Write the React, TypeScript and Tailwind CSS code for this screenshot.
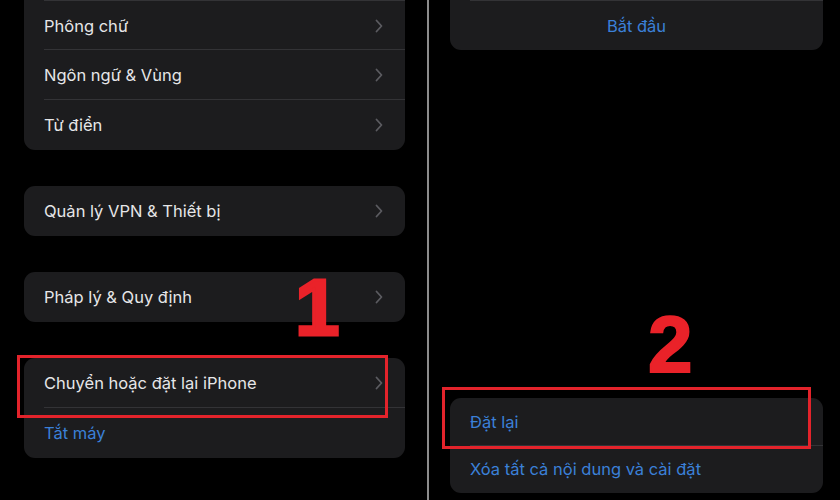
import React from "react";

const Chevron = () => (
  <svg width="8" height="14" viewBox="0 0 8 14" fill="none" className="shrink-0">
    <path d="M1.5 1.5L6.5 7L1.5 12.5" stroke="#5b5b60" strokeWidth="1.8" strokeLinecap="round" strokeLinejoin="round" />
  </svg>
);

type RowProps = {
  label: string;
  blue?: boolean;
  chevron?: boolean;
  center?: boolean;
  last?: boolean;
  h?: string;
};

const Row: React.FC<RowProps> = ({ label, blue, chevron = true, center, last, h = "h-[50px]" }) => (
  <div className={`relative flex items-center ${h} ${center ? "justify-center" : "pl-5 pr-[22px]"}`}>
    <span
      className={`text-[16.5px] leading-none ${center ? "" : "flex-1"} ${blue ? "text-[#3b80d8]" : "text-[#e6e6e8]"}`}
    >
      {label}
    </span>
    {chevron && !center && <Chevron />}
    {!last && <div className="absolute bottom-0 left-5 right-0 h-px bg-[#333336]" />}
  </div>
);

const Card: React.FC<{ className?: string; children: React.ReactNode }> = ({ className = "", children }) => (
  <div className={`rounded-[11px] bg-[#1c1c1e] overflow-hidden ${className}`}>{children}</div>
);

// continuation of a list that starts above the visible area
const TopEdge = () => (
  <div className="h-[2px] bg-[#1c1c1e]">
    <div className="ml-5 h-px bg-[#333336]" />
  </div>
);

export default function App() {
  return (
    <div
      className="relative flex h-[500px] w-[840px] overflow-hidden bg-black"
      style={{ fontFamily: "Inter, 'Noto Sans', 'Liberation Sans', sans-serif" }}
    >
      {/* Left screen */}
      <div className="flex w-[427px] shrink-0 flex-col pl-6 pr-[22px]">
        <Card className="rounded-t-none">
          <TopEdge />
          <Row label="Phông chữ" h="h-[48px]" />
          <Row label="Ngôn ngữ & Vùng" />
          <Row label="Từ điển" last />
        </Card>
        <Card className="mt-9">
          <Row label="Quản lý VPN & Thiết bị" last />
        </Card>
        <Card className="mt-9">
          <Row label="Pháp lý & Quy định" last />
        </Card>
        <Card className="mt-9">
          <Row label="Chuyển hoặc đặt lại iPhone" />
          <Row label="Tắt máy" blue chevron={false} last />
        </Card>
      </div>

      {/* Divider */}
      <div className="w-[2px] shrink-0 bg-[#8c8c8c]" />

      {/* Right screen */}
      <div className="flex flex-1 flex-col pl-[21px] pr-[17px]">
        <Card className="rounded-t-none">
          <TopEdge />
          <Row label="Bắt đầu" blue center last h="h-[48px]" />
        </Card>
        <Card className="mt-[348px]">
          <Row label="Đặt lại" blue chevron={false} h="h-[48px]" />
          <Row label="Xóa tất cả nội dung và cài đặt" blue chevron={false} h="h-[47px]" last />
        </Card>
      </div>

      {/* Annotations */}
      <div className="absolute left-[17px] top-[355px] h-[63px] w-[371px] border-[3px] border-[#e3232b]" />
      <div className="absolute left-[442px] top-[387px] h-[62px] w-[369px] border-[3px] border-[#e3232b]" />
      <div
        className="absolute left-[295px] top-[268px] text-[80px] font-black leading-[80px] text-[#ea2229] [-webkit-text-stroke:3px_#ea2229]"
        style={{ fontFamily: "'Liberation Sans', Arial, sans-serif" }}
      >
        1
      </div>
      <div
        className="absolute left-[648px] top-[305px] text-[80px] font-black leading-[80px] text-[#ea2229] [-webkit-text-stroke:2px_#ea2229]"
        style={{ fontFamily: "'Liberation Sans', Arial, sans-serif" }}
      >
        2
      </div>
    </div>
  );
}
